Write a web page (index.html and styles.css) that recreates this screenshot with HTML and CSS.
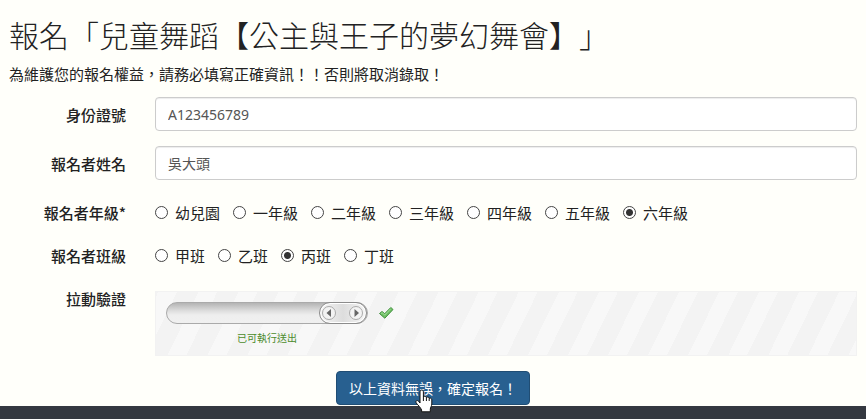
FILE: index.html
```html
<!DOCTYPE html>
<html lang="zh-Hant">
<head>
  <meta charset="UTF-8" />
  <meta name="viewport" content="width=device-width, initial-scale=1.0" />
  <title>報名</title>
  <link rel="stylesheet" href="styles.css">
</head>
<body>
  <main class="container">
    <h2>報名「兒童舞蹈【公主與王子的夢幻舞會】」</h2>
    <p class="notice">為維護您的報名權益，請務必填寫正確資訊！！否則將取消錄取！</p>

    <form class="signup-form">
      <div class="form-group">
        <label class="control-label" for="idNumber">身份證號</label>
        <input type="text" class="form-control" id="idNumber" name="id_number" value="A123456789" />
      </div>

      <div class="form-group">
        <label class="control-label" for="studentName">報名者姓名</label>
        <input type="text" class="form-control" id="studentName" name="name" value="吳大頭" />
      </div>

      <div class="form-group options" role="radiogroup" aria-labelledby="gradeLabel">
        <span class="control-label" id="gradeLabel">報名者年級*</span>
        <div class="radio-list">
          <label class="radio"><input type="radio" name="grade" value="0" />幼兒園</label>
          <label class="radio"><input type="radio" name="grade" value="1" />一年級</label>
          <label class="radio"><input type="radio" name="grade" value="2" />二年級</label>
          <label class="radio"><input type="radio" name="grade" value="3" />三年級</label>
          <label class="radio"><input type="radio" name="grade" value="4" />四年級</label>
          <label class="radio"><input type="radio" name="grade" value="5" />五年級</label>
          <label class="radio"><input type="radio" name="grade" value="6" checked />六年級</label>
        </div>
      </div>

      <div class="form-group options" role="radiogroup" aria-labelledby="classLabel">
        <span class="control-label" id="classLabel">報名者班級</span>
        <div class="radio-list">
          <label class="radio"><input type="radio" name="class" value="a" />甲班</label>
          <label class="radio"><input type="radio" name="class" value="b" />乙班</label>
          <label class="radio"><input type="radio" name="class" value="c" checked />丙班</label>
          <label class="radio"><input type="radio" name="class" value="d" />丁班</label>
        </div>
      </div>

      <div class="form-group verify">
        <label class="control-label" for="slider">拉動驗證</label>
        <div class="captcha">
          <div class="captcha-row">
            <input type="range" class="slider" id="slider" min="0" max="100" value="100" />
            <svg class="check" viewBox="0 0 16 16" width="16" height="16" aria-hidden="true">
              <path d="M1.5 8.500 4 6.500l2.700 2.200L12.800 2.500l2.200 2-8.200 8.700z" fill="#6fc065" stroke="#3f8f3c" stroke-linejoin="round" />
              <path d="M3 8.600 4.100 7.700l2.700 2.300 6-6.300" fill="none" stroke="#a0dc98" />
            </svg>
          </div>
          <div class="captcha-text">已可執行送出</div>
        </div>
      </div>

      <div class="actions">
        <button type="submit" class="btn-primary">
          以上資料無誤，確定報名！
          <svg class="pointer" viewBox="0 0 18 24" width="18" height="24" aria-hidden="true">
            <path d="M5 14V3c0-2.600 3.400-2.600 3.400 0v5c.5-1.400 2.900-1.200 3 .6.8-1 2.700-.7 2.800.8 1-.7 2.600-.2 2.600 1.400V15c0 2-1.500 3.500-1.500 5.200V22.800H6.600V21C5.700 18.500 3 16.400 1.300 14c-1.200-1.800.7-3.400 2.300-1.800z" fill="#fff" stroke="#111" stroke-linejoin="round" />
            <path d="M8.400 8v4M11.400 8.600V12M14.200 9.400V12" fill="none" stroke="#111" />
          </svg>
        </button>
      </div>
    </form>
  </main>
  <footer class="footer"></footer>
</body>
</html>
```

FILE: styles.css
```css
:root {
  --background: #fffffa;
  --text: #222;
  --input-text: #555;
  --border: #ccc;
  --primary: #286090;
  --primary-border: #204d74;
  --footer: #343840;
}

* {
  box-sizing: border-box;
}

body {
  display: flex;
  flex-direction: column;
  min-height: 100vh;
  margin: 0;
  background: var(--background);
  color: var(--text);
  font-family: "Noto Sans CJK TC", sans-serif;
  font-size: 15px;
  line-height: 21px;
  text-spacing-trim: space-all;
}

.container {
  padding: 18px 9px 1px;
}

h2 {
  margin: 0 0 12px;
  font-size: 30px;
  font-weight: 300;
  line-height: 33px;
}

.notice {
  margin: 0 0 13px;
}

.form-group {
  display: grid;
  grid-template-columns: 117px 1fr;
  column-gap: 29px;
  align-items: center;
  margin-bottom: 15px;
}

.control-label {
  font-weight: 500;
  text-align: right;
}

.form-control {
  width: 100%;
  height: 34px;
  padding: 6px 12px;
  border: 1px solid var(--border);
  border-radius: 4px;
  background: #fff;
  box-shadow: inset 0 1px 1px rgba(0, 0, 0, 0.075);
  color: var(--input-text);
  font-family: "Noto Sans", "Noto Sans CJK TC", sans-serif;
  font-size: 14px;
}

/* radio rows */
.options {
  min-height: 28px;
  padding-top: 7px;
}

.radio-list {
  display: flex;
  flex-wrap: wrap;
  gap: 0 13px;
}

.radio {
  display: flex;
  align-items: center;
  gap: 7px;
}

.radio input {
  appearance: none;
  width: 13px;
  height: 13px;
  margin: 0;
  border: 1px solid #444;
  border-radius: 50%;
  background: #fff;
}

.radio input:checked {
  background: radial-gradient(circle, #333 0 3px, #fff 4px);
}

/* slide to verify */
.verify {
  align-items: start;
  padding-top: 7px;
}

.captcha {
  margin-top: 3px;
  padding: 10px;
  border: 1px solid #f2f2f2;
  background: repeating-linear-gradient(116deg, #f3f3f3 0 2px, #f8f8f8 2px 19px, #f3f3f3 19px 36px);
}

.captcha-row {
  display: flex;
  align-items: center;
  gap: 10px;
}

.slider {
  appearance: none;
  width: 202px;
  height: 22px;
  margin: 0;
  border: 1px solid #aaa;
  border-radius: 11px;
  background: linear-gradient(#b4b4b4, #dedede 40%, #eee 60%, #f0f0f0);
}

.slider::-webkit-slider-thumb {
  appearance: none;
  width: 48px;
  height: 22px;
  margin-right: -1px;
  border: 1px solid #8c8c8c;
  border-radius: 11px;
  background: url("data:image/svg+xml,%3Csvg xmlns='http://www.w3.org/2000/svg' viewBox='0 0 46 20'%3E%3Cg fill='%23f3f3f3' stroke='%23aaa'%3E%3Ccircle cx='9' cy='10' r='6.5'/%3E%3Ccircle cx='36' cy='10' r='6.5'/%3E%3C/g%3E%3Cpath d='M11 6v8L6.5 10zM34.5 6v8l4.5-4z' fill='%23666'/%3E%3C/svg%3E") center / 46px 20px no-repeat, linear-gradient(90deg, #f5f5f5, #ddd 50%, #f5f5f5);
  box-shadow: inset 0 0 0 1px #fff;
}

.captcha-text {
  width: 202px;
  margin-top: 6px;
  color: #4b8b2b;
  font-size: 10px;
  line-height: 15px;
  text-align: center;
}

.actions {
  text-align: center;
}

.btn-primary {
  position: relative;
  height: 34px;
  padding: 0 12px;
  border: 1px solid var(--primary-border);
  border-radius: 4px;
  background: var(--primary);
  color: #fff;
  font-family: inherit;
  font-size: 14px;
  vertical-align: top;
  cursor: pointer;
}

/* hand over the button */
.pointer {
  position: absolute;
  top: 17px;
  left: 78px;
}

.footer {
  flex: 1;
  min-height: 13px;
  background: var(--footer);
}
```
